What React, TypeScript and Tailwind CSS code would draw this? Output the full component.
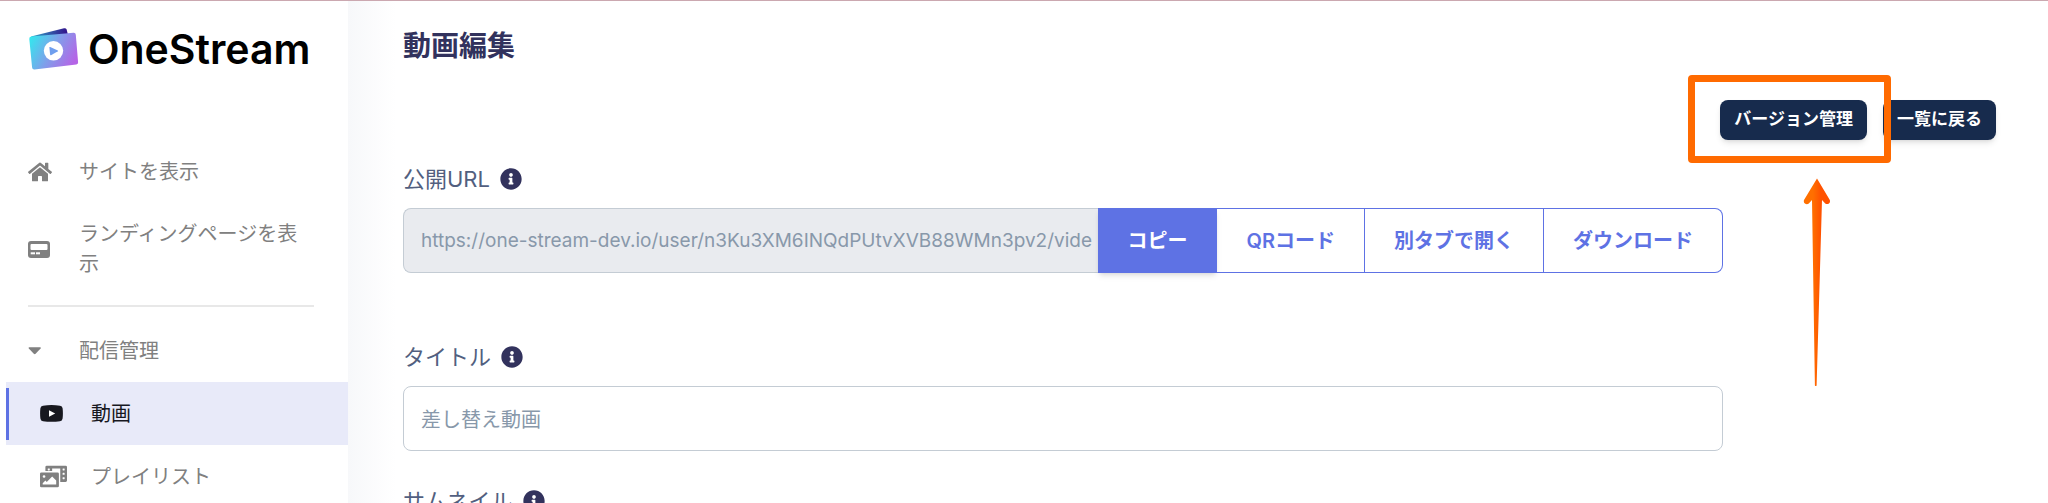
import React from 'react';
import { FaHome, FaInfoCircle, FaPhotoVideo } from 'react-icons/fa';

const Logo: React.FC = () => (
  <svg className="h-[44px] w-[52px]" viewBox="0 0 52 44" aria-hidden="true">
    <defs>
      <linearGradient id="front" x1="0" y1="0.2" x2="1" y2="0.6">
        <stop offset="0" stopColor="#35e6ee" />
        <stop offset="0.5" stopColor="#7f9fea" />
        <stop offset="1" stopColor="#b564e6" />
      </linearGradient>
      <linearGradient id="back" x1="0" y1="0" x2="1" y2="0">
        <stop offset="0" stopColor="#2fa6c8" />
        <stop offset="1" stopColor="#33108a" />
      </linearGradient>
    </defs>
    <path d="M3 9.5 L36 1.2 Q38 0.8 38.6 2.6 L40 8 L8 14 Z" fill="url(#back)" />
    <path
      d="M3.2 9.6 L45.5 5.8 Q47.6 5.6 47.8 7.7 L50.1 35.3 Q50.3 37.3 48.3 37.5 L6.5 42.4 Q4.3 42.6 4.1 40.5 L1.3 12 Q1.1 9.8 3.2 9.6 Z"
      fill="url(#front)"
    />
    <circle cx="25.5" cy="23.8" r="9.7" fill="#fff" />
    <path d="M22.3 20 L29.8 23.4 Q30.5 23.8 29.9 24.3 L23 28.2 Q22.2 28.5 22.1 27.6 L21.4 20.6 Q21.5 19.7 22.3 20 Z" fill="#6f9eee" />
  </svg>
);

const PanelIcon: React.FC = () => (
  <svg className="h-[17px] w-[22px]" viewBox="0 0 22 17" aria-hidden="true">
    <rect width="22" height="17" rx="3" fill="#808080" />
    <rect x="2.5" y="3" width="17" height="6" rx="1" fill="#fff" />
    <rect x="2.7" y="11.3" width="4.3" height="2" fill="#fff" />
    <rect x="8" y="11.3" width="4" height="2" fill="#fff" />
  </svg>
);

const CaretIcon: React.FC = () => (
  <svg className="h-[8px] w-[14px]" viewBox="0 0 14 8" aria-hidden="true">
    <path d="M1.2 0.3 H12.2 Q13.4 0.5 12.6 1.6 L7.6 6.8 Q6.7 7.6 5.8 6.8 L0.8 1.6 Q0 0.5 1.2 0.3 Z" fill="#808080" />
  </svg>
);

const VideoIcon: React.FC = () => (
  <svg className="h-[17px] w-[23px]" viewBox="0 0 23 17" aria-hidden="true">
    <path
      d="M3 0.7 Q11.5 -0.5 20 0.7 Q22.3 1 22.6 3.3 Q23.2 8.5 22.6 13.5 Q22.3 15.9 20 16.3 Q11.5 17.3 3 16.3 Q0.7 15.9 0.4 13.5 Q-0.2 8.5 0.4 3.3 Q0.7 1 3 0.7 Z"
      fill="#17181f"
    />
    <path d="M9 5.2 L15.2 8.4 L9 11.7 Z" fill="#fff" />
  </svg>
);

const NavItem: React.FC<{ icon: React.ReactNode; label: string }> = ({ icon, label }) => (
  <a href="#" className="flex items-center py-4 pr-9 pl-7 text-[#808080]">
    <span className="w-[51px] shrink-0">{icon}</span>
    <span>{label}</span>
  </a>
);

const SubItem: React.FC<{ icon: React.ReactNode; label: string; active?: boolean }> = ({ icon, label, active }) => (
  <a
    href="#"
    className={`ml-1.5 flex h-[63px] items-center ${active ? 'bg-[#e8eaf9] text-[#17181f]' : 'text-[#808080]'}`}
  >
    <span className={`h-[52px] w-[3px] ${active ? 'bg-[#5e72e4]' : ''}`} />
    <span className="ml-[31px] w-[51px] shrink-0">{icon}</span>
    <span>{label}</span>
  </a>
);

const FieldLabel: React.FC<{ htmlFor: string; text: string }> = ({ htmlFor, text }) => (
  <label htmlFor={htmlFor} className="mb-3 flex h-[34px] items-center gap-2.5 text-[22px] text-[#525f7f]">
    {text}
    <FaInfoCircle className="size-[22px] text-[#32325d]" />
  </label>
);

const inputClass = 'h-[65px] min-w-0 border border-[#c4ccd4] px-[17px] text-[#8898aa] focus:outline-none';
const actionClass = 'flex h-[65px] shrink-0 items-center border-y border-r border-[#5e72e4] px-[29px] text-xl font-semibold';
const darkButton = 'h-10 rounded-lg bg-[#172b4d] px-3.5 text-[17px] font-bold text-white shadow-md';

const App: React.FC = () => {
  return (
    <div className="flex h-screen overflow-hidden border-t border-[#cba8b0] bg-white font-['Inter','Noto_Sans_CJK_JP',sans-serif]">
      {/* Sidebar */}
      <aside className="w-[348px] shrink-0 text-xl leading-[30px]">
        <div className="flex h-[140px] items-start gap-2 pt-[26px] pl-7">
          <Logo />
          <span className="text-[41px] leading-[44px] font-semibold text-black">OneStream</span>
        </div>
        <nav>
          <NavItem icon={<FaHome className="size-6" />} label="サイトを表示" />
          <NavItem icon={<PanelIcon />} label="ランディングページを表示" />
          <hr className="mt-2.5 mr-[34px] mb-[13px] ml-7 border-t-2 border-[#e8e8e8]" />
          <NavItem icon={<CaretIcon />} label="配信管理" />
          <SubItem icon={<VideoIcon />} label="動画" active />
          <SubItem icon={<FaPhotoVideo className="size-[27px]" />} label="プレイリスト" />
        </nav>
      </aside>

      {/* Soft shadow cast by the sidebar */}
      <div className="w-12 shrink-0 bg-linear-to-r from-[#f7f8fa] to-white" />

      <main className="min-w-0 flex-1 pr-[52px] pl-[7px]">
        <h1 className="pt-[25px] text-[28px] leading-10 font-bold text-[#32325d]">動画編集</h1>

        <div className="relative mt-[34px] flex justify-end gap-4">
          <button type="button" className={darkButton}>バージョン管理</button>
          <button type="button" className={darkButton}>一覧に戻る</button>

          {/* Callout frame and arrow */}
          <div className="pointer-events-none absolute -top-[25px] right-[105px] h-[88px] w-[203px] rounded border-[7px] border-[#ff6a00]">
            <svg className="absolute top-[96px] left-[108px] h-[209px] w-[28px]" viewBox="0 0 28 209" aria-hidden="true">
              <defs>
                <linearGradient id="arrow" x1="0" y1="0" x2="1" y2="0">
                  <stop offset="0.35" stopColor="#ff6f00" />
                  <stop offset="0.65" stopColor="#ff5200" />
                </linearGradient>
              </defs>
              <path
                d="M14 0.5 L26.8 22 Q27.6 24.4 25.6 25.8 Q23.8 26.6 22.2 25.4 L19 22 L13.6 207.5 Q12.8 208.6 11.9 207.5 L9 22 L5.8 25.4 Q4.2 26.8 2.2 25.8 Q0.2 24.4 1 22 Z"
                fill="url(#arrow)"
              />
            </svg>
          </div>
        </div>

        <form className="max-w-[1320px] pt-[22px]">
          <FieldLabel htmlFor="url" text="公開URL" />
          <div className="flex">
            <input
              id="url"
              type="text"
              readOnly
              value="https://one-stream-dev.io/user/n3Ku3XM6INQdPUtvXVB88WMn3pv2/vide"
              className={`${inputClass} flex-1 rounded-l-lg border-r-0 bg-[#e9ebef] pr-0 text-[19px]`}
            />
            <button type="button" className={`${actionClass} bg-[#5e72e4] text-white shadow-md`}>コピー</button>
            <button type="button" className={`${actionClass} text-[#5e72e4]`}>QRコード</button>
            <a href="#" className={`${actionClass} text-[#5e72e4]`}>別タブで開く</a>
            <a href="#" className={`${actionClass} rounded-r-lg text-[#5e72e4]`}>ダウンロード</a>
          </div>

          <div className="mt-[67px]">
            <FieldLabel htmlFor="title" text="タイトル" />
            <input id="title" type="text" defaultValue="差し替え動画" className={`${inputClass} w-full rounded-lg text-xl`} />
          </div>

          <div className="mt-[33px]">
            <FieldLabel htmlFor="thumbnail" text="サムネイル" />
            <input id="thumbnail" type="file" className={`${inputClass} w-full rounded-lg text-xl`} />
          </div>
        </form>
      </main>
    </div>
  );
};

export default App;
